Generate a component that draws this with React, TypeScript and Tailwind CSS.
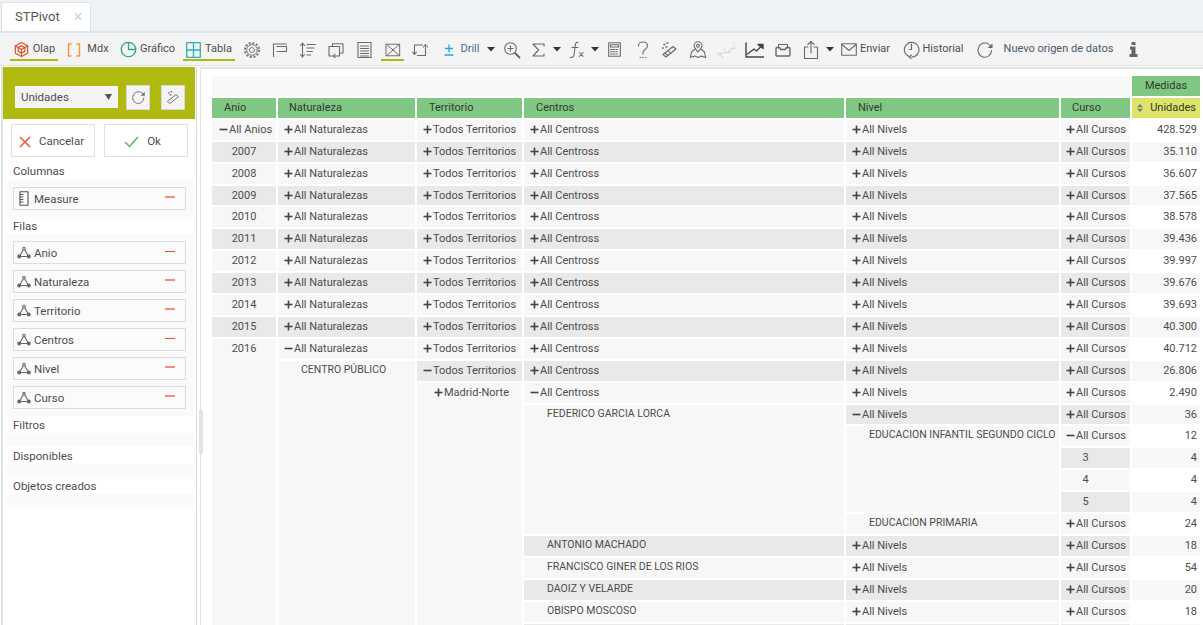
import React from "react";

const S = ({ w = 18, h = 18, vb = "0 0 18 18", c = "#6a6a6a", sw = 1.1, children }: any) => (
  <svg width={w} height={h} viewBox={vb} fill="none" stroke={c} strokeWidth={sw} strokeLinecap="round" strokeLinejoin="round" className="shrink-0">{children}</svg>
);
const Caret = () => <svg width="8" height="5" viewBox="0 0 8 5" className="shrink-0"><path d="M0 0h8L4 4.500z" fill="#333" /></svg>;

const Olap = () => <S w={17} h={17} c="#d9542b" sw={1.3}><path d="M9 1.500l6.500 3.500v8L9 16.500 2.500 13V5z" /><path d="M5.500 7L9 5l3.500 2v4L9 13l-3.500-2z" /><path d="M9 9v7M9 9L2.500 5M9 9l6.500-4" /></S>;
const Brackets = () => <S w={14} c="#f0973a" sw={1.4} vb="0 0 14 18"><path d="M4 3H1.500v12H4M10 3h2.500v12H10" /></S>;
const Pie = () => <S w={17} h={17} vb="0 0 17 17" c="#2aa884" sw={1.3}><circle cx="8.500" cy="8.500" r="7.200" /><path d="M8.500 1.500v7h7" /></S>;
const Grid = () => <S w={15} h={16} vb="0 0 15 16" c="#2fb0b5" sw={1.3}><rect x=".7" y=".7" width="13.600" height="14.600" /><path d="M7.500 .7v14.600M.7 8h13.600" /></S>;
const Gear = () => <S c="#808080" sw={1}><circle cx="9" cy="9" r="2.500" /><circle cx="9" cy="9" r="5.300" /><circle cx="9" cy="9" r="7" strokeWidth={2.2} strokeDasharray="2.200 1.470" strokeLinecap="butt" /></S>;
const Tree = () => <S><path d="M2.500 15.500V3h13M6 5.500h9.500v5H6" /></S>;
const Sort = () => <S><path d="M3.500 2v14M1.500 4.500l2-2.500 2 2.500M1.500 13.500l2 2.500 2-2.500M8 3.500h8.500M8 7h7M8 10.500h5.500M8 14h3.500" /></S>;
const Swap = () => <S><path d="M5.500 5V2.800h10.500v9.200h-3M2 5.500h10.500V15H2z" /><path d="M8 13l-1.500 2L8 16.500" /></S>;
const Lines = () => <S w={15} vb="0 0 15 18"><rect x="1" y="1.500" width="13" height="15" /><path d="M3.500 5h8M3.500 7.500h8M3.500 10h8M3.500 12.500h8M3.500 15h8" /></S>;
const BoxX = () => <S w={16} h={16} vb="0 0 18 18"><rect x="1.500" y="2.500" width="15" height="13" /><path d="M1.500 2.500l15 13M16.500 2.500l-15 13" /></S>;
const Rotate = () => <S><path d="M3.500 4h8M6.500 14.500h8M3.500 4v9M14.500 6v8.500" /><path d="M1.500 11l2 2.500 2-2.500M12.500 6l2-2.500 2 2.500" /></S>;
const Plus = () => <S w={12} h={14} vb="0 0 12 14" c="#26a6d9" sw={1.3}><path d="M6 2v7M2.500 5.500h7M2 12h8" /></S>;
const Search = () => <S><circle cx="7.500" cy="7.500" r="5.800" /><path d="M7.500 5v5M5 7.500h5" /><path d="M12 12l4.500 4.500" strokeWidth={2} /></S>;
const Sigma = () => <S w={13} h={14} vb="0 0 13 14" sw={1.2}><path d="M12 3V1H1l5.500 6L1 13h11v-2" /></S>;
const Fx = () => <S w={16} vb="0 0 16 18"><path d="M9 1.500C6.500 1 6.300 3 6 6l-1 8c-.3 2-1.500 2.800-3.500 2.200M3 6.500h6" /><path d="M10.500 11.500l3.500 4M14 11.500l-3.500 4" /></S>;
const Calc = () => <S w={13} h={15} vb="0 0 13 15"><rect x=".7" y=".7" width="11.600" height="13.600" /><path d="M2.500 2.800h8v2.200h-8z" /><path d="M2.500 7.500h8M2.500 9.800h8M2.500 12h8" strokeDasharray="1.500 1.200" /></S>;
const Help = () => <S w={12} h={18} vb="0 0 12 18" sw={1.1}><path d="M1.500 5C1.500 2.500 3.500 1 6 1s4.500 1.500 4.500 4c0 2-1.500 3-3 4-1 .7-1.500 1.500-1.500 3v1" /><path d="M3 16.500h.5M5.800 16.500h.5M8.500 16.500h.5" /></S>;
const Wand = () => <S><path d="M2 13.500l10-8 3 2.500L5 16z" /><path d="M4 12l3 2.500M7 9.800l3 2.500" /><path d="M3 3.500h.8M6 2h.8M5 6h.8M1.500 7h.8" strokeWidth={1.6} /></S>;
const MapPin = () => <S><path d="M9 11C6.500 8 5 6.500 5 4.800a4 4 0 018 0C13 6.500 11.500 8 9 11z" /><circle cx="9" cy="4.800" r="1.400" /><path d="M5.500 8.500L2.500 11l-1.200 5.500 4.700-1.500 3 1.500 3-1.500 4.700 1.500L15.500 11l-3-2.500" /></S>;
const Scatter = () => <S w={21} vb="0 0 21 18" c="#c9c9c9" sw={1}><path d="M1 13l3-1 2 1 3-2 2 .5 3-3 2-.5 3-3" strokeDasharray="1.500 1" /><path d="M3 15l2-1M8 9l1-1M12 12l2-1M17 3l1-1M18 8l1-1M6 16h1" /></S>;
const Chart = () => <S w={19} h={16} vb="0 0 19 16" c="#444" sw={1.4}><path d="M1 1v14h17.500" /><path d="M2.500 12L9 7l2.500 2L17 3.500" /><path d="M13 2.500h5v4z" fill="#444" /></S>;
const Tray = () => <S w={16} h={14} vb="0 0 16 14"><path d="M3.500 5V1.500h9V5" /><path d="M1 5.500c0-.5.500-1 1-1h2.500L6 6.500h4l1.500-2H14c.5 0 1 .5 1 1V12c0 .5-.5 1-1 1H2c-.5 0-1-.5-1-1z" strokeWidth={1.4} /></S>;
const Share = () => <S w={16} h={20} vb="0 0 16 20"><path d="M5 7H1.500v11.500h13V7H11" /><path d="M8 13V1.500M4.800 4.500L8 1.500l3.200 3" /></S>;
const Mail = () => <S w={16} h={13} vb="0 0 16 13"><rect x=".7" y=".7" width="14.600" height="11.600" /><path d="M1 1.500l7 6 7-6" /></S>;
const Clock = () => <S w={17} h={19} vb="0 0 17 19"><path d="M6 16.500A7.300 7.300 0 118.500 17" /><path d="M8.500 4v5.500h-2" /><path d="M8.500 15l-2.500 1.700 2 2" /></S>;
const Refresh = ({ s = 18, c = "#6a6a6a" }: any) => <S w={s} h={s} c={c}><path d="M15.500 9.500A6.800 6.800 0 112.800 6a6.800 6.800 0 0111.500-1.500" /><path d="M11.500 7h5V2.500z" fill={c} stroke="none" /></S>;
const Info = () => <svg width="9" height="15" viewBox="0 0 9 15" className="shrink-0"><path d="M2.500 0h4v3h-4zM1 4.500h5.500V12H8.500v3H.5v-3h2V7.500H1z" fill="#666" /></svg>;

const Tool = ({ w, children, ul }: any) => (
  <div className={"relative flex items-center justify-center shrink-0 h-full pt-[1px] " + w}>
    {children}
    {ul && <span className="absolute left-0 right-0 bottom-[4px] h-[2px] bg-[#afb90f]" />}
  </div>
);
const L = ({ children }: any) => <span className="text-[11px] text-[#4d4d4d] whitespace-nowrap">{children}</span>;

const Toolbar = () => (
  <div className="flex items-center h-[35px] bg-[#f4f4f4] border-t-2 border-t-[#dbe7f0] border-b border-b-[#e0e0e0] pl-[10px] shrink-0">
    <Tool w="w-[48px] gap-[3px]" ul><Olap /><L>Olap</L></Tool>
    <Tool w="w-[42px] ml-[9px] gap-[6px]"><Brackets /><L>Mdx</L></Tool>
    <Tool w="w-[55px] ml-[11px] gap-[3px]"><Pie /><L>Gráfico</L></Tool>
    <Tool w="w-[52px] ml-[8px] gap-[4px]" ul><Grid /><L>Tabla</L></Tool>
    <Tool w="w-[18px] ml-[8px]"><Gear /></Tool>
    <Tool w="w-[18px] ml-[10px]"><Tree /></Tool>
    <Tool w="w-[18px] ml-[10px]"><Sort /></Tool>
    <Tool w="w-[18px] ml-[10px]"><Swap /></Tool>
    <Tool w="w-[15px] ml-[12px]"><Lines /></Tool>
    <Tool w="w-[23px] ml-[9px]" ul><BoxX /></Tool>
    <Tool w="w-[18px] ml-[7px]"><Rotate /></Tool>
    <Tool w="w-[12px] ml-[14px]"><Plus /></Tool>
    <Tool w="w-[20px] ml-[5px]"><span className="text-[11px] text-[#4a6a8a]">Drill</span></Tool>
    <Tool w="w-[8px] ml-[7px]"><Caret /></Tool>
    <Tool w="w-[18px] ml-[8px]"><Search /></Tool>
    <Tool w="w-[13px] ml-[11px]"><Sigma /></Tool>
    <Tool w="w-[8px] ml-[8px]"><Caret /></Tool>
    <Tool w="w-[16px] ml-[8px]"><Fx /></Tool>
    <Tool w="w-[8px] ml-[6px]"><Caret /></Tool>
    <Tool w="w-[13px] ml-[9px]"><Calc /></Tool>
    <Tool w="w-[12px] ml-[16px]"><Help /></Tool>
    <Tool w="w-[18px] ml-[12px]"><Wand /></Tool>
    <Tool w="w-[18px] ml-[10px]"><MapPin /></Tool>
    <Tool w="w-[21px] ml-[9px]"><Scatter /></Tool>
    <Tool w="w-[19px] ml-[8px]"><Chart /></Tool>
    <Tool w="w-[16px] ml-[11px]"><Tray /></Tool>
    <Tool w="w-[16px] ml-[12px]"><Share /></Tool>
    <Tool w="w-[8px] ml-[7px]"><Caret /></Tool>
    <Tool w="w-[49px] ml-[7px] gap-[3px]"><Mail /><L>Enviar</L></Tool>
    <Tool w="w-[61px] ml-[13px] gap-[2px]"><Clock /><L>Historial</L></Tool>
    <Tool w="w-[18px] ml-[12px]"><Refresh /></Tool>
    <Tool w="w-[109px] ml-[10px]"><span className="text-[11px] text-[#4a5a6a] whitespace-nowrap">Nuevo origen de datos</span></Tool>
    <Tool w="w-[9px] ml-[16px]"><Info /></Tool>
  </div>
);

const Dim = () => <S w={14} h={13} vb="0 0 14 13" c="#666" sw={1.1}><path d="M7 2.500L2.500 10.500h9z" /><circle cx="7" cy="2.500" r="1.200" fill="#fbfbfb" /><circle cx="2.200" cy="10.500" r="1.400" fill="#666" /><circle cx="11.800" cy="10.500" r="1.400" fill="#666" /></S>;
const Ruler = () => <S w={10} h={15} vb="0 0 10 15" c="#555" sw={1.1}><rect x="1" y=".7" width="8" height="13.600" /><path d="M1 3.500h3M1 6h3M1 8.500h3M1 11h3" /></S>;

const Pill = ({ icon, label, dark }: any) => (
  <div className="flex items-center h-[23px] mx-[7px] bg-[#fbfbfb] border border-[#dcdcdc]">
    <span className="w-[16px] ml-[2px] flex justify-center shrink-0">{icon}</span>
    <span className="ml-[2px] pt-[2px] flex-1 text-[11.5px] text-[#4d4d4d]">{label}</span>
    <span className={"w-[10px] mr-[10px] mb-[3px] " + (dark ? "h-[1px] bg-[#e0502f]" : "h-[2px] bg-[#ee8f78]")} />
  </div>
);

const SecTitle = ({ children, cls }: any) => <div className={"pl-[10px] text-[11.5px] text-[#4d4d4d] leading-[16px] " + (cls || "")}>{children}</div>;
const Empty = () => <div className="h-[13px] ml-[3px] mr-[3px] bg-[#fafafa]" />;

const Sidebar = () => (
  <div className="w-[196px] shrink-0 h-full bg-white border-l-2 border-l-[#d9e3ea] border-r border-r-[#dcdcdc]">
    <div className="h-[52px] bg-[#afb90f] mr-[1px] flex items-center pl-[12px] pt-[8px]">
      <div className="w-[103px] h-[22px] bg-[#f4f4f4] flex items-center justify-between pl-[6px] pr-[6px]">
        <span className="pt-[2px] text-[11.5px] text-[#4d4d4d]">Unidades</span>
        <svg width="7" height="6" viewBox="0 0 7 6"><path d="M0 0h7L3.500 6z" fill="#555" /></svg>
      </div>
      <div className="ml-[8px] w-[24px] h-[25px] bg-[#f4f4f4] border border-[#d8d8d8] flex items-center justify-center"><Refresh s={15} /></div>
      <div className="ml-[11px] w-[24px] h-[25px] bg-[#f4f4f4] border border-[#d8d8d8] flex items-center justify-center"><S w={15} h={15}><path d="M2 13.500l10-8 3 2.500L5 16z" /><path d="M3 3.500h.8M6 2h.8M5 6h.8" strokeWidth={1.6} /></S></div>
    </div>
    <div className="flex mt-[5px] ml-[8px] gap-[9px]">
      <div className="w-[84px] h-[33px] border border-[#e0e0e0] flex items-center justify-center gap-[8px] pt-[2px] pr-[3px]">
        <S w={12} h={12} vb="0 0 12 12" c="#e8603c" sw={1.7}><path d="M1.500 1.500l9 9M10.500 1.500l-9 9" /></S>
        <span className="text-[11.5px] text-[#4d4d4d]">Cancelar</span>
      </div>
      <div className="w-[84px] h-[33px] border border-[#e0e0e0] flex items-center justify-center gap-[8px] pt-[2px] pr-[7px]">
        <S w={15} h={12} vb="0 0 15 12" c="#69bb6d" sw={1.7}><path d="M1.500 6.500l4 4L13.500 1.500" /></S>
        <span className="text-[11.5px] text-[#4d4d4d]">Ok</span>
      </div>
    </div>
    <SecTitle cls="mt-[6px] mb-[1px]">Columnas</SecTitle>
    <div className="ml-[3px] mr-[3px] bg-[#fafafa] py-[7px]"><Pill icon={<Ruler />} label="Measure" /></div>
    <SecTitle cls="mt-[1px]">Filas</SecTitle>
    <div className="ml-[3px] mr-[3px] bg-[#fafafa] py-[7px] flex flex-col gap-[6px]">
      <Pill icon={<Dim />} label="Anio" dark />
      <Pill icon={<Dim />} label="Naturaleza" />
      <Pill icon={<Dim />} label="Territorio" />
      <Pill icon={<Dim />} label="Centros" dark />
      <Pill icon={<Dim />} label="Nivel" />
      <Pill icon={<Dim />} label="Curso" />
    </div>
    <SecTitle cls="mt-[1px]">Filtros</SecTitle>
    <Empty />
    <SecTitle cls="mt-[2px]">Disponibles</SecTitle>
    <Empty />
    <SecTitle cls="mt-[1px]">Objetos creados</SecTitle>
    <Empty />
  </div>
);

const Pm = ({ minus }: { minus?: boolean }) => (
  <svg width="9" height="9" viewBox="0 0 9 9" className="inline-block mr-[1px] align-[-1px]">
    {!minus && <rect x="3.700" y=".5" width="1.600" height="8" fill="#444" />}
    <rect x=".5" y="3.700" width="8" height="1.600" fill="#444" />
  </svg>
);

const zebra = (i: number) => (i % 2 ? "bg-[#e9e9e9]" : "bg-[#f7f7f7]");
const td = "p-0 align-top text-[11px] leading-[19px] text-[#4d4d4d] whitespace-nowrap overflow-hidden";
const caps = "p-0 align-top text-[10.5px] leading-[18px] text-[#4d4d4d] whitespace-nowrap overflow-hidden";
const AllCell = ({ i, label, minus, pl }: any) => (
  <td className={td + " " + zebra(i) + " " + pl}>{label && <Pm minus={minus} />}{label}</td>
);

const values = ["428.529","35.110","36.607","37.565","38.578","39.436","39.997","39.676","39.693","40.300","40.712","26.806","2.490","36","12","4","4","4","24","18","54","20","18",""];
const anios = ["2007","2008","2009","2010","2011","2012","2013","2014","2015"];
const centros: Record<number, string> = { 19: "ANTONIO MACHADO", 20: "FRANCISCO GINER DE LOS RIOS", 21: "DAOIZ Y VELARDE", 22: "OBISPO MOSCOSO" };

const Row = ({ i }: { i: number }) => {
  const rest = 24 - i;
  return (
    <tr className="h-[19.920px]">
      {i === 0 && <AllCell i={0} label="All Anios" minus pl="pl-[7px]" />}
      {i >= 1 && i <= 9 && <td className={td + " text-center " + zebra(i)}>{anios[i - 1]}</td>}
      {i === 10 && <td rowSpan={rest} className={td + " text-center bg-[#f7f7f7]"}>2016</td>}

      {i <= 10 && <AllCell i={i} label="All Naturalezas" minus={i === 10} pl="pl-[6px]" />}
      {i === 11 && <td rowSpan={rest} className={caps + " bg-[#f7f7f7] pl-[23px]"}>CENTRO PÚBLICO</td>}

      {i <= 11 && <AllCell i={i} label="Todos Territorios" minus={i === 11} pl="pl-[6px]" />}
      {i === 12 && <td rowSpan={rest} className={td + " bg-[#f7f7f7] pl-[17px]"}><Pm />Madrid-Norte</td>}

      {i <= 12 && <AllCell i={i} label="All Centross" minus={i === 12} pl="pl-[6px]" />}
      {i === 13 && <td rowSpan={6} className={caps + " bg-[#f7f7f7] pl-[23px]"}>FEDERICO GARCIA LORCA</td>}
      {i >= 19 && <td className={caps + " pl-[23px] " + zebra(i)}>{centros[i] || ""}</td>}

      {(i <= 13 || i >= 19) && <AllCell i={i} label={i === 23 ? "" : "All Nivels"} minus={i === 13} pl="pl-[6px]" />}
      {i === 14 && <td rowSpan={4} className={caps + " bg-[#f7f7f7] pl-[23px]"}>EDUCACION INFANTIL SEGUNDO CICLO</td>}
      {i === 18 && <td className={caps + " bg-[#f7f7f7] pl-[23px]"}>EDUCACION PRIMARIA</td>}

      {i >= 15 && i <= 17
        ? <td className={td + " text-center pr-[20px] " + zebra(i)}>{i - 12}</td>
        : <AllCell i={i} label={i === 23 ? "" : "All Cursos"} minus={i === 14} pl="pl-[5px]" />}

      <td className={td + " text-right pr-[3px] " + (i % 2 ? "bg-[#f7f7f7]" : "bg-white")}>{values[i]}</td>
    </tr>
  );
};

const Th = ({ children, pl }: any) => (
  <th className={"p-0 h-[19.900px] bg-[#81c784] text-left font-normal text-[11px] text-[#2f3a2f] " + pl}>{children}</th>
);

const Pivot = () => (
  <table className="table-fixed border-separate border-spacing-[2px] w-[992px] ml-[9px] mt-[5px]">
    <colgroup>
      <col className="w-[64px]" /><col className="w-[137px]" /><col className="w-[105px]" /><col className="w-[320px]" /><col className="w-[213px]" /><col className="w-[69px]" /><col className="w-[68px]" />
    </colgroup>
    <thead>
      <tr>
        <th colSpan={6} className="p-0 h-[19.900px] bg-[#f7f7f7]" />
        <th className="p-0 h-[19.900px] bg-[#81c784] text-center font-normal text-[11px] text-[#2f3a2f]">Medidas</th>
      </tr>
      <tr>
        <Th pl="pl-[12px]">Anio</Th>
        <Th pl="pl-[11px]">Naturaleza</Th>
        <Th pl="pl-[12px]">Territorio</Th>
        <Th pl="pl-[12px]">Centros</Th>
        <Th pl="pl-[12px]">Nivel</Th>
        <Th pl="pl-[11px]">Curso</Th>
        <th className="p-0 h-[19.900px] bg-[#dfe36a] font-normal text-[11px] text-[#2f3a2f]">
          <div className="flex items-center justify-between pl-[5px] pr-[4px]">
            <svg width="6" height="8" viewBox="0 0 6 8"><path d="M3 0l3 3.300H0zM3 8L0 4.700h6z" fill="#777" /></svg>
            <span>Unidades</span>
          </div>
        </th>
      </tr>
    </thead>
    <tbody>
      {values.map((_, i) => <Row key={i} i={i} />)}
    </tbody>
  </table>
);

export default function App() {
  return (
    <div className="w-[1203px] h-[625px] overflow-hidden flex flex-col bg-white" style={{ fontFamily: '"Roboto", "Noto Sans", sans-serif' }}>
      <div className="h-[31px] shrink-0 bg-[#eef2f5] flex items-end pl-[1px]">
        <div className="w-[90px] h-[29px] bg-white border border-b-0 border-[#d9e5ee] flex items-center pl-[13px]">
          <span className="text-[13px] text-[#555]">STPivot</span>
          <span className="ml-[14px] text-[16px] text-[#ccd6dd] leading-none">×</span>
        </div>
      </div>
      <Toolbar />
      <div className="flex-1 min-h-0 flex pl-[1px] pt-[1px]">
        <Sidebar />
        <div className="relative w-[3px] shrink-0">
          <span className="absolute left-[2px] top-[343px] w-[4px] h-[44px] bg-[#e4e4e4] z-10" />
        </div>
        <div className="flex-1 min-w-0 h-full border-l border-t-2 border-[#e2e2e2] bg-white overflow-hidden">
          <Pivot />
        </div>
      </div>
    </div>
  );
}
